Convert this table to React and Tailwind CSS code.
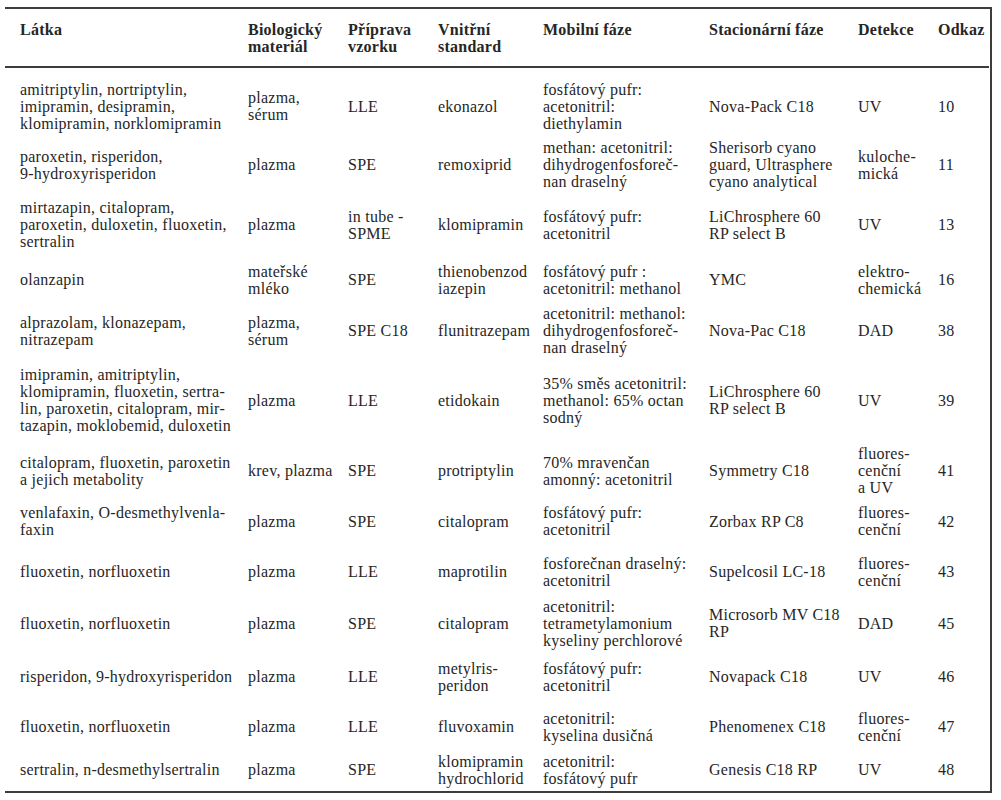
import React from "react";

const cols = [
  { label: ["Látka"], w: "w-[243px]", pad: "pl-[15px]" },
  { label: ["Biologický", "materiál"], w: "w-[100px]", pad: "" },
  { label: ["Příprava", "vzorku"], w: "w-[90px]", pad: "" },
  { label: ["Vnitřní", "standard"], w: "w-[105px]", pad: "" },
  { label: ["Mobilní fáze"], w: "w-[166px]", pad: "" },
  { label: ["Stacionární fáze"], w: "w-[149px]", pad: "" },
  { label: ["Detekce"], w: "w-[80px]", pad: "" },
  { label: ["Odkaz"], w: "w-[51px]", pad: "" },
];

// h = row height, off = nudge of the text inside the row (scan isn't evenly spaced)
const rows = [
  {
    h: "h-[68px]",
    off: "pt-[9px]",
    cells: [
      ["amitriptylin, nortriptylin,", "imipramin, desipramin,", "klomipramin, norklomipramin"],
      ["plazma,", "sérum"],
      ["LLE"],
      ["ekonazol"],
      ["fosfátový pufr:", "acetonitril:", "diethylamin"],
      ["Nova-Pack C18"],
      ["UV"],
      ["10"],
    ],
  },
  {
    h: "h-[59px]",
    cells: [
      ["paroxetin, risperidon,", "9-hydroxyrisperidon"],
      ["plazma"],
      ["SPE"],
      ["remoxiprid"],
      ["methan: acetonitril:", "dihydrogenfosforeč-", "nan draselný"],
      ["Sherisorb cyano", "guard, Ultrasphere", "cyano analytical"],
      ["kuloche-", "mická"],
      ["11"],
    ],
  },
  {
    h: "h-[58px]",
    off: "pt-[3px]",
    cells: [
      ["mirtazapin, citalopram,", "paroxetin, duloxetin, fluoxetin,", "sertralin"],
      ["plazma"],
      ["in tube -", "SPME"],
      ["klomipramin"],
      ["fosfátový pufr:", "acetonitril"],
      ["LiChrosphere 60", "RP select B"],
      ["UV"],
      ["13"],
    ],
  },
  {
    h: "h-[53px]",
    off: "pt-[2px]",
    cells: [
      ["olanzapin"],
      ["mateřské", "mléko"],
      ["SPE"],
      ["thienobenzod", "iazepin"],
      ["fosfátový pufr :", "acetonitril: methanol"],
      ["YMC"],
      ["elektro-", "chemická"],
      ["16"],
    ],
  },
  {
    h: "h-[60px]",
    off: "pb-[9px]",
    cells: [
      ["alprazolam, klonazepam,", "nitrazepam"],
      ["plazma,", "sérum"],
      ["SPE C18"],
      ["flunitrazepam"],
      ["acetonitril: methanol:", "dihydrogenfosforeč-", "nan draselný"],
      ["Nova-Pac C18"],
      ["DAD"],
      ["38"],
    ],
  },
  {
    h: "h-[70px]",
    cells: [
      [
        "imipramin, amitriptylin,",
        "klomipramin, fluoxetin, sertra-",
        "lin, paroxetin, citalopram, mir-",
        "tazapin, moklobemid, duloxetin",
      ],
      ["plazma"],
      ["LLE"],
      ["etidokain"],
      ["35% směs acetonitril:", "methanol: 65% octan", "sodný"],
      ["LiChrosphere 60", "RP select B"],
      ["UV"],
      ["39"],
    ],
  },
  {
    h: "h-[61px]",
    off: "pt-[10px]",
    cells: [
      ["citalopram, fluoxetin, paroxetin", "a jejich metabolity"],
      ["krev, plazma"],
      ["SPE"],
      ["protriptylin"],
      ["70% mravenčan", "amonný: acetonitril"],
      ["Symmetry C18"],
      ["fluores-", "cenční", "a UV"],
      ["41"],
    ],
  },
  {
    h: "h-[50px]",
    cells: [
      ["venlafaxin, O-desmethylvenla-", "faxin"],
      ["plazma"],
      ["SPE"],
      ["citalopram"],
      ["fosfátový pufr:", "acetonitril"],
      ["Zorbax RP C8"],
      ["fluores-", "cenční"],
      ["42"],
    ],
  },
  {
    h: "h-[51px]",
    cells: [
      ["fluoxetin, norfluoxetin"],
      ["plazma"],
      ["LLE"],
      ["maprotilin"],
      ["fosforečnan draselný:", "acetonitril"],
      ["Supelcosil LC-18"],
      ["fluores-", "cenční"],
      ["43"],
    ],
  },
  {
    h: "h-[52px]",
    cells: [
      ["fluoxetin, norfluoxetin"],
      ["plazma"],
      ["SPE"],
      ["citalopram"],
      ["acetonitril:", "tetrametylamonium", "kyseliny perchlorové"],
      ["Microsorb MV C18", "RP"],
      ["DAD"],
      ["45"],
    ],
  },
  {
    h: "h-[52px]",
    off: "pt-[3px]",
    cells: [
      ["risperidon, 9-hydroxyrisperidon"],
      ["plazma"],
      ["LLE"],
      ["metylris-", "peridon"],
      ["fosfátový pufr:", "acetonitril"],
      ["Novapack C18"],
      ["UV"],
      ["46"],
    ],
  },
  {
    h: "h-[47px]",
    off: "pt-[4px]",
    cells: [
      ["fluoxetin, norfluoxetin"],
      ["plazma"],
      ["LLE"],
      ["fluvoxamin"],
      ["acetonitril:", "kyselina dusičná"],
      ["Phenomenex C18"],
      ["fluores-", "cenční"],
      ["47"],
    ],
  },
  {
    h: "h-[43px]",
    cells: [
      ["sertralin, n-desmethylsertralin"],
      ["plazma"],
      ["SPE"],
      ["klomipramin", "hydrochlorid"],
      ["acetonitril:", "fosfátový pufr"],
      ["Genesis C18 RP"],
      ["UV"],
      ["48"],
    ],
  },
];

function Lines({ lines }) {
  return lines.map((l, i) => (
    <div key={i} className="whitespace-nowrap">
      {l}
    </div>
  ));
}

export default function App() {
  return (
    <div className="min-h-[800px] bg-white pt-[7px] font-['Liberation_Serif',serif] text-[#262626]">
      <div className="ml-[5px] w-[987px] border-t-2 border-r-2 border-b-2 border-[#3c3c3c]">
        <table className="table-fixed border-collapse text-[16px] leading-[17px] tracking-[0.25px]">
          <colgroup>
            {cols.map((c, i) => (
              <col key={i} className={c.w} />
            ))}
          </colgroup>
          <thead>
            <tr className="h-[58px] border-b-2 border-[#3c3c3c]">
              {cols.map((c, i) => (
                <th
                  key={i}
                  className={`p-0 pt-[12px] text-left align-top font-bold leading-[17px] ${c.pad}`}
                >
                  <Lines lines={c.label} />
                </th>
              ))}
            </tr>
          </thead>
          <tbody>
            {rows.map((r, ri) => (
              <tr key={ri} className={r.h}>
                {r.cells.map((cell, ci) => (
                  <td
                    key={ci}
                    className={`p-0 align-middle ${cols[ci].pad} ${r.off || ""}`}
                  >
                    <Lines lines={cell} />
                  </td>
                ))}
              </tr>
            ))}
          </tbody>
        </table>
      </div>
    </div>
  );
}
